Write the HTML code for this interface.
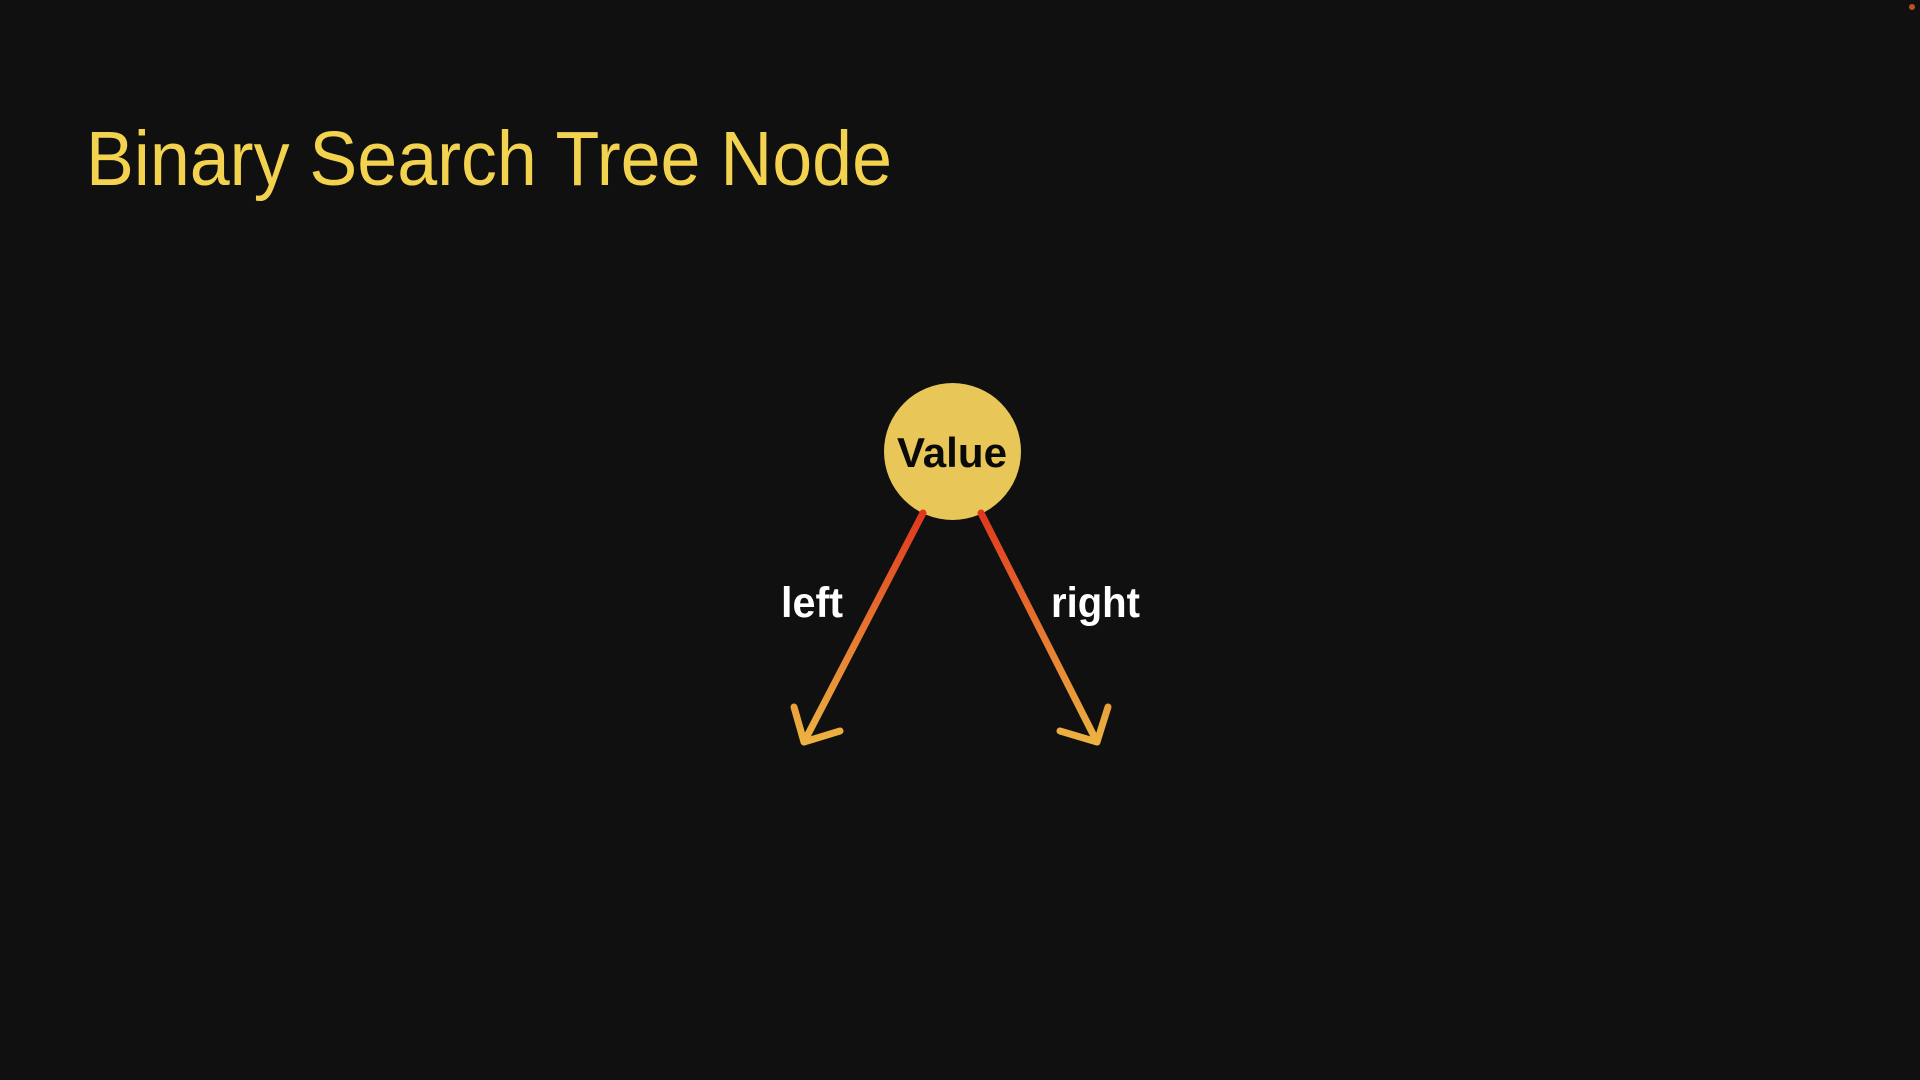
<!DOCTYPE html>
<html><head><meta charset="utf-8"><style>
html,body{margin:0;padding:0;background:#101010;width:1920px;height:1080px;overflow:hidden}
</style></head><body>
<svg width="1920" height="1080" viewBox="0 0 1920 1080" xmlns="http://www.w3.org/2000/svg" style="position:absolute;left:0;top:0">
<defs>
<linearGradient id="g" gradientUnits="userSpaceOnUse" x1="0" y1="513" x2="0" y2="745">
<stop offset="0" stop-color="#e0381e"/><stop offset="1" stop-color="#ecb442"/>
</linearGradient>
</defs>
<rect width="1920" height="1080" fill="#101010"/>
<circle cx="1912" cy="7" r="3" fill="#c0521e"/>
<text x="86" y="185" font-family="Liberation Sans, sans-serif" font-size="77" fill="#f2d24e" textLength="806" lengthAdjust="spacingAndGlyphs">Binary Search Tree Node</text>
<circle cx="952.5" cy="451.5" r="68.5" fill="#e8c658"/>
<text x="952" y="467" text-anchor="middle" font-family="Liberation Sans, sans-serif" font-weight="bold" font-size="42" fill="#0a0a0a" textLength="110" lengthAdjust="spacingAndGlyphs">Value</text>
<g fill="none" stroke="url(#g)" stroke-width="7" stroke-linecap="round" stroke-linejoin="round">
<line x1="923" y1="513" x2="804" y2="742"/>
<polyline points="794,707 804,742 840,731"/>
<line x1="981" y1="513" x2="1097" y2="742"/>
<polyline points="1108,707 1097,742 1060,731"/>
</g>
<text x="781" y="617" font-family="Liberation Sans, sans-serif" font-weight="bold" font-size="43" fill="#ffffff" textLength="62" lengthAdjust="spacingAndGlyphs">left</text>
<text x="1051" y="617" font-family="Liberation Sans, sans-serif" font-weight="bold" font-size="43" fill="#ffffff" textLength="89" lengthAdjust="spacingAndGlyphs">right</text>
</svg>
</body></html>
